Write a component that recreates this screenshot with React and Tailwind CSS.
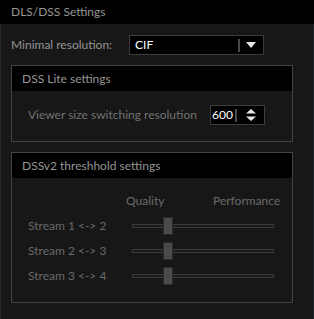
import React from 'react';

const font = { fontFamily: 'Lato, "Open Sans", sans-serif' };

const Slider = ({ pos }) => (
  <div className="relative h-[18px] w-[142px]">
    <div className="absolute left-0 right-0 top-[7px] h-[4px] border border-[#3c3c3c] bg-[#1b1b1b]" />
    <div
      className="absolute top-0 h-[18px] w-[10px] border border-[#2a2a2a] bg-[#4a4a4a]"
      style={{ left: pos }}
    />
  </div>
);

const GroupBox = ({ title, children, className = '' }) => (
  <div className={`border border-[#434343] bg-[#171717] ${className}`}>
    <div className="flex h-[25px] items-center bg-black pl-[10px] text-[#959595]">{title}</div>
    {children}
  </div>
);

export default function App() {
  const streams = ['Stream 1 <-> 2', 'Stream 2 <-> 3', 'Stream 3 <-> 4'];
  return (
    <div className="h-[319px] w-[314px] overflow-hidden bg-[#171717] text-[12px]" style={font}>
      <div className="flex h-[24px] items-center bg-black pl-[11px] text-[#959595]">DLS/DSS Settings</div>
      <div className="flex h-[295px] flex-col border-l border-r border-[#24272b] pl-[10px] pr-[20px]">
        <div className="mt-[11px] flex items-center">
          <span className="w-[118px] text-[#939393]">Minimal resolution:</span>
          <div className="flex h-[20px] w-[135px] items-center border border-[#3d3d3d] bg-black">
            <span className="ml-[5px] flex-1 text-white">CIF</span>
            <div className="h-[13px] w-[2px] bg-[#4a4a4a]" />
            <svg width="22" height="12" viewBox="0 0 22 12" className="mr-[1px]">
              <path d="M6 3 L16 3 L11 9 Z" fill="#e6e6e6" />
            </svg>
          </div>
        </div>
        <GroupBox title="DSS Lite settings" className="mt-[10px] h-[77px]">
          <div className="mt-[14px] flex items-center pl-[16px]">
            <span className="w-[182px] text-[#727272]">Viewer size switching resolution</span>
            <div className="flex h-[20px] w-[55px] items-center border border-[#3d3d3d] bg-black">
              <span className="ml-[1px] text-white">600</span>
              <div className="ml-[2px] h-[13px] w-[2px] bg-[#4a4a4a]" />
              <svg width="22" height="16" viewBox="0 0 22 16" className="ml-[3px]">
                <path d="M6 6.5 L16 6.5 L11 2 Z" fill="#e6e6e6" />
                <path d="M6 9.5 L16 9.5 L11 14 Z" fill="#e6e6e6" />
              </svg>
            </div>
          </div>
        </GroupBox>
        <GroupBox title="DSSv2 threshhold settings" className="mt-[10px] h-[151px]">
          <div className="mt-[14px] flex text-[#6a6a6a]">
            <span className="ml-[114px] w-[87px]">Quality</span>
            <span>Performance</span>
          </div>
          <div className="mt-[7px] flex flex-col gap-[7px]">
            {streams.map((s) => (
              <div key={s} className="flex items-center pl-[16px]">
                <span className="w-[104px] text-[#6a6a6a]">{s}</span>
                <Slider pos={31} />
              </div>
            ))}
          </div>
        </GroupBox>
      </div>
    </div>
  );
}
